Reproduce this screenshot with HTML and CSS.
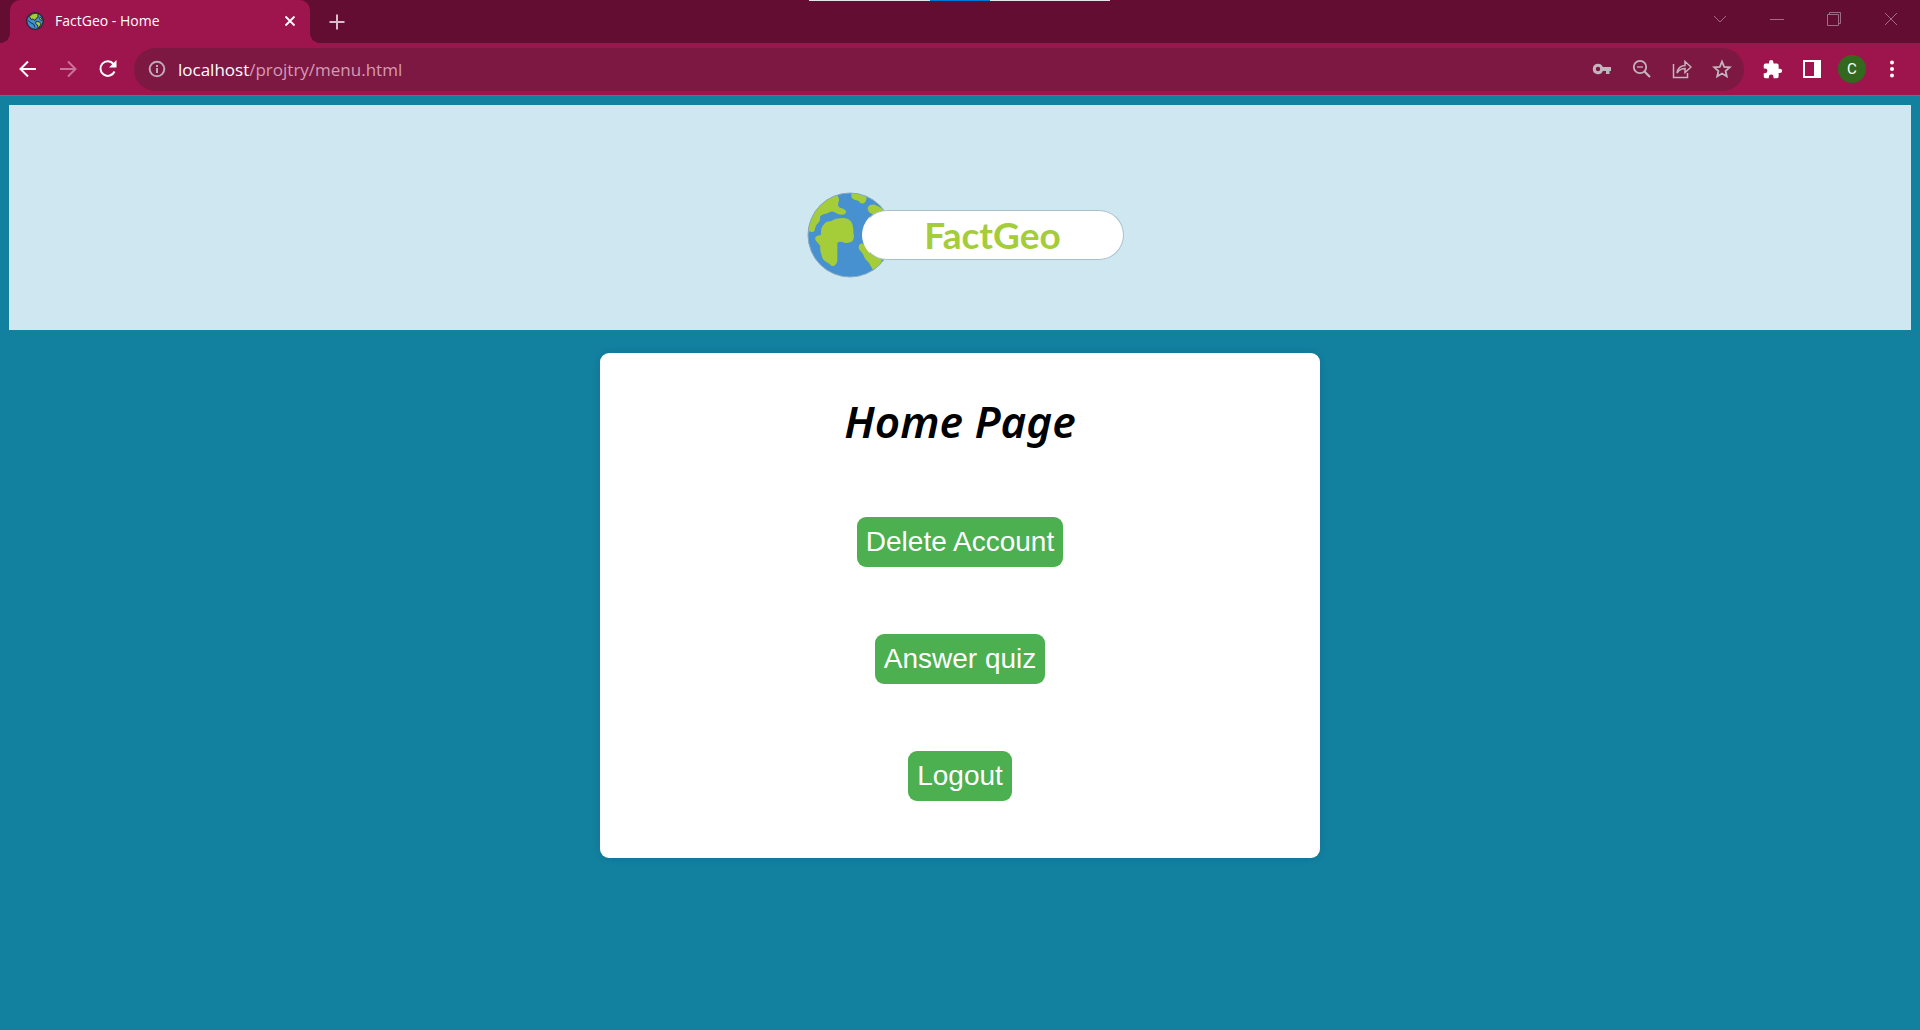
FILE: index.html
```html
<!DOCTYPE html>
<html lang="en">
<head>
<meta charset="utf-8">
<title>FactGeo - Home</title>
<link rel="stylesheet" href="styles.css">
</head>
<body>
<div class="browser">
  <div class="tabstrip">
    <div class="tab">
      <svg class="favicon" viewBox="0 0 18 18"><circle cx="9" cy="9" r="8.300" fill="#3f8fd2" stroke="#2a2433" stroke-width="1.300"/><path d="M3.500 4.500Q6 1.200 10 1.200L12.500 2.500 11.500 4 12.500 5 10 6.500 9 8.500 7 7 5 7.500ZM10 9.500L13 9.800 15 11.500 14 14 12 16 11.500 13 9.500 11.500ZM14.500 5L16.500 8 15 8.500 13.500 6.500Z" fill="#a6ce39" stroke="#2a2433" stroke-width=".9"/><path d="M2 8.500L5 11 7.500 12 9 15.500" fill="none" stroke="#2a2433" stroke-width=".9"/></svg>
      <span class="tab-title">FactGeo - Home</span>
      <button class="icon-btn" aria-label="Close tab"><svg width="12" height="12" viewBox="0 0 12 12"><path d="M1.500 1.500L10.500 10.500M10.500 1.500L1.500 10.500" stroke="#fff" stroke-width="1.800"/></svg></button>
    </div>
    <button class="icon-btn new-tab" aria-label="New tab"><svg width="16" height="16" viewBox="0 0 16 16"><path d="M8 .5V15.500M.5 8H15.500" stroke="#dcbccb" stroke-width="2"/></svg></button>
    <div class="snap-bar"><span></span></div>
    <div class="window-controls">
      <button class="icon-btn" aria-label="Search tabs"><svg width="14" height="14" viewBox="0 0 14 14"><path d="M1 4L7 10 13 4"/></svg></button>
      <button class="icon-btn" aria-label="Minimize"><svg width="14" height="14" viewBox="0 0 14 14"><path d="M0 7.500H14"/></svg></button>
      <button class="icon-btn" aria-label="Restore"><svg width="14" height="14" viewBox="0 0 14 14"><path d="M.5 2.500H11.500V13.500H.5ZM2.500 2.500V.5H13.500V11.500H11.500"/></svg></button>
      <button class="icon-btn" aria-label="Close window"><svg width="14" height="14" viewBox="0 0 14 14"><path d="M1 1L13 13M13 1L1 13"/></svg></button>
    </div>
  </div>
  <div class="toolbar">
    <div class="nav">
      <button class="icon-btn" aria-label="Back"><svg width="20" height="20" viewBox="0 0 20 20"><path d="M18 10H3M10 2.500L2.500 10 10 17.500" fill="none" stroke="#fff" stroke-width="2"/></svg></button>
      <button class="icon-btn" aria-label="Forward"><svg width="20" height="20" viewBox="0 0 20 20"><path d="M2 10H17M10 2.500L17.500 10 10 17.500" fill="none" stroke="#c9729a" stroke-width="2"/></svg></button>
      <button class="icon-btn" aria-label="Reload"><svg width="20" height="20" viewBox="0 0 20 20"><path d="M16.500 12.500A7.300 7.300 0 1 1 15.500 5" fill="none" stroke="#fff" stroke-width="2"/><path d="M18.500 1V8.500H11Z" fill="#fff"/></svg></button>
    </div>
    <div class="omnibox">
      <svg width="18" height="18" viewBox="0 0 18 18"><circle cx="9" cy="9" r="7.300" fill="none" stroke="#bfa9b6" stroke-width="2"/><path d="M9 8V13M9 5V7" stroke="#bfa9b6" stroke-width="2"/></svg>
      <div class="url"><span class="host">localhost</span>/projtry/menu.html</div>
      <div class="omni-actions">
        <button class="icon-btn" aria-label="Passwords"><svg width="20" height="20" viewBox="0 0 20 20"><path fill="#c4b4bd" fill-rule="evenodd" d="M6 4.800A5.200 5.200 0 1 0 10.800 12H14V15H17.500V12H19V8H10.800A5.200 5.200 0 0 0 6 4.800ZM6 7.800A2.200 2.200 0 1 1 6 12.200 2.200 2.200 0 0 1 6 7.800Z"/></svg></button>
        <button class="icon-btn" aria-label="Zoom"><svg width="20" height="20" viewBox="0 0 20 20" fill="none" stroke="#c4b4bd" stroke-width="1.800"><circle cx="8" cy="8" r="6.200"/><path d="M12.500 12.500L18 18" stroke-width="2.200"/><path d="M5 8H11" stroke-width="1.300"/></svg></button>
        <button class="icon-btn" aria-label="Share"><svg width="20" height="20" viewBox="0 0 20 20" fill="none" stroke="#c4b4bd" stroke-width="1.500"><path d="M1.500 5V18.500H15.500V14"/><path d="M5 14Q6 7 13 6.500V2.500L19 8 13 13.500V9.500Q8 9.500 5 14Z"/></svg></button>
        <button class="icon-btn" aria-label="Bookmark"><svg width="20" height="20" viewBox="0 0 20 20" fill="none" stroke="#c4b4bd" stroke-width="1.800"><path d="M10 2.600L12.200 7.800 17.800 8.300 13.600 12 14.800 17.500 10 14.600 5.200 17.500 6.400 12 2.200 8.300 7.800 7.800Z"/></svg></button>
      </div>
    </div>
    <div class="extras">
      <button class="icon-btn" aria-label="Extensions"><svg width="21" height="21" viewBox="0 0 24 24"><path fill="#fff" d="M20.500 11H19V7a2 2 0 0 0-2-2h-4V3.500a2.500 2.500 0 0 0-5 0V5H4a2 2 0 0 0-2 2v3.800h1.500a2.700 2.700 0 0 1 0 5.400H2V20a2 2 0 0 0 2 2h3.800v-1.500a2.700 2.700 0 0 1 5.400 0V22H17a2 2 0 0 0 2-2v-4h1.500a2.500 2.500 0 0 0 0-5z"/></svg></button>
      <button class="icon-btn" aria-label="Side panel"><svg width="20" height="20" viewBox="0 0 20 20"><path fill="#fff" fill-rule="evenodd" d="M1 1H19V19H1ZM3 3V17H12V3Z"/></svg></button>
      <button class="avatar" aria-label="Profile">C</button>
      <button class="icon-btn" aria-label="Menu"><svg width="20" height="20" viewBox="0 0 20 20" fill="#fff"><circle cx="10" cy="3.500" r="2"/><circle cx="10" cy="10" r="2"/><circle cx="10" cy="16.500" r="2"/></svg></button>
    </div>
  </div>
</div>
<main class="page">
  <header class="banner">
    <div class="logo">
      <svg class="globe" viewBox="36 36 258 258">
        <defs><clipPath id="disc"><circle cx="165" cy="165" r="126"/></clipPath></defs>
        <circle cx="165" cy="165" r="126" fill="#4891d0"/>
        <g clip-path="url(#disc)" fill="#a4cd39">
          <path d="M30 30H122L130 52Q134 60 130 68Q126 80 138 84Q152 88 154 96Q150 106 140 104Q128 104 118 96Q106 92 98 100Q84 102 76 108L74 124Q62 134 60 146Q58 158 50 156L30 150Z"/>
          <path d="M88 132Q92 124 106 124Q126 112 146 114Q166 116 172 132Q176 146 175 160Q180 172 172 184Q160 192 148 188Q136 182 127 188V244Q122 260 110 258Q104 250 94 246Q82 240 80 226Q74 212 76 198L64 184Q56 172 66 168L78 164Q76 142 88 132Z"/>
          <path d="M168 34L170 54Q180 62 190 62Q196 72 206 70Q216 66 214 48L200 34Z"/>
          <path d="M218 84Q222 72 240 74L290 100L240 110L232 102Q218 98 218 84Z"/>
          <path d="M192 208Q188 194 200 190L260 220V260L236 274L222 248Q210 240 204 222Z"/>
        </g>
        <circle cx="165" cy="165" r="126" fill="none" stroke="#87a9be" stroke-width="3"/>
      </svg>
      <span class="brand">FactGeo</span>
    </div>
  </header>
  <section class="card">
    <h1>Home Page</h1>
    <button class="action">Delete Account</button>
    <button class="action">Answer quiz</button>
    <button class="action">Logout</button>
  </section>
</main>
</body>
</html>
```
FILE: styles.css
```css
* { box-sizing: border-box; }

body {
  margin: 0;
  min-height: 100vh;
  background: #12809f;
  font-family: "Liberation Sans", Arial, sans-serif;
}

svg { display: block; flex: none; }
button { font: inherit; border: 0; cursor: pointer; }

.icon-btn {
  display: flex;
  align-items: center;
  justify-content: center;
  padding: 0;
  background: none;
}

/* Browser frame */
.browser {
  background: #9e144d;
  border-bottom: 1px solid #b8487a;
  font-family: "Segoe UI", "Open Sans", sans-serif;
}

.tabstrip {
  position: relative;
  display: flex;
  align-items: stretch;
  height: 43px;
  padding: 0 1px 0 10px;
  background: #640d32;
}

.tab {
  position: relative;
  display: flex;
  align-items: center;
  gap: 11px;
  width: 300px;
  padding: 0 14px 2px 16px;
  border-radius: 10px 10px 0 0;
  background: #9e144d;
  color: #fff;
}

.tab::before,
.tab::after {
  content: "";
  position: absolute;
  bottom: 0;
  width: 10px;
  height: 10px;
}

.tab::before {
  right: 100%;
  background: radial-gradient(circle at 0 0, #640d32 10px, #9e144d 10px);
}

.tab::after {
  left: 100%;
  background: radial-gradient(circle at 100% 0, #640d32 10px, #9e144d 10px);
}

.favicon { width: 18px; height: 18px; }
.tab-title { flex: 1; font-size: 14px; }
.new-tab { width: 54px; }

.snap-bar {
  position: absolute;
  top: 0;
  left: 50%;
  display: flex;
  justify-content: center;
  width: 301px;
  height: 1px;
  margin-left: -151px;
  background: #e5e5e5;
}

.snap-bar span { width: 60px; background: #0078d7; }

.window-controls {
  display: flex;
  gap: 1px;
  margin-left: auto;
  padding-bottom: 6px;
}

.window-controls .icon-btn { width: 56px; }
.window-controls svg { fill: none; stroke: #a26d84; stroke-width: 1; }

.toolbar {
  display: flex;
  align-items: center;
  gap: 16px;
  height: 52px;
  padding: 0 16px 0 18px;
}

.nav,
.omni-actions,
.extras {
  display: flex;
  align-items: center;
  gap: 20px;
}

.omnibox {
  display: flex;
  flex: 1;
  align-items: center;
  gap: 12px;
  height: 43px;
  padding: 0 12px 0 14px;
  border-radius: 22px;
  background: #7d1843;
}

.url { flex: 1; color: #d59bb5; font-size: 17px; }
.host { color: #fff; }

.extras { gap: 16px; }
.extras .icon-btn { width: 24px; }

.avatar {
  width: 28px;
  height: 28px;
  margin: 0 -2px;
  padding: 0;
  border-radius: 50%;
  background: #33691e;
  color: #fff;
  font-family: Roboto, sans-serif;
  font-size: 15px;
}

/* Page */
.page { padding: 9px; }

.banner {
  display: flex;
  justify-content: center;
  padding: 87px 0 52px;
  background: #cfe7f0;
}

.logo {
  display: flex;
  align-items: center;
  padding-left: 10px;
}

.globe { width: 86px; height: 86px; }

.brand {
  width: 262px;
  margin-left: -31px;
  border: 1px solid #a9c0cc;
  border-left-color: #fff;
  border-radius: 25px;
  background: #fff;
  color: #a4cd39;
  font-family: "Trebuchet MS", Lato, sans-serif;
  font-size: 37px;
  font-weight: 700;
  line-height: 48px;
  text-align: center;
}

.card {
  display: flex;
  flex-direction: column;
  align-items: center;
  gap: 67px;
  max-width: 720px;
  margin: 23px auto 0;
  padding: 40px 18px 57px;
  border-radius: 9px;
  background: #fff;
  box-shadow: 0 0 9px rgba(0, 0, 0, 0.1);
}

h1 {
  margin: 0;
  font-family: "Lucida Handwriting", "Noto Sans", cursive;
  font-size: 44px;
  font-style: italic;
  font-weight: 600;
  line-height: 57px;
}

.action {
  padding: 9px;
  border-radius: 9px;
  background: #4caf50;
  color: #fff;
  font-size: 28px;
  line-height: 32px;
}
```
